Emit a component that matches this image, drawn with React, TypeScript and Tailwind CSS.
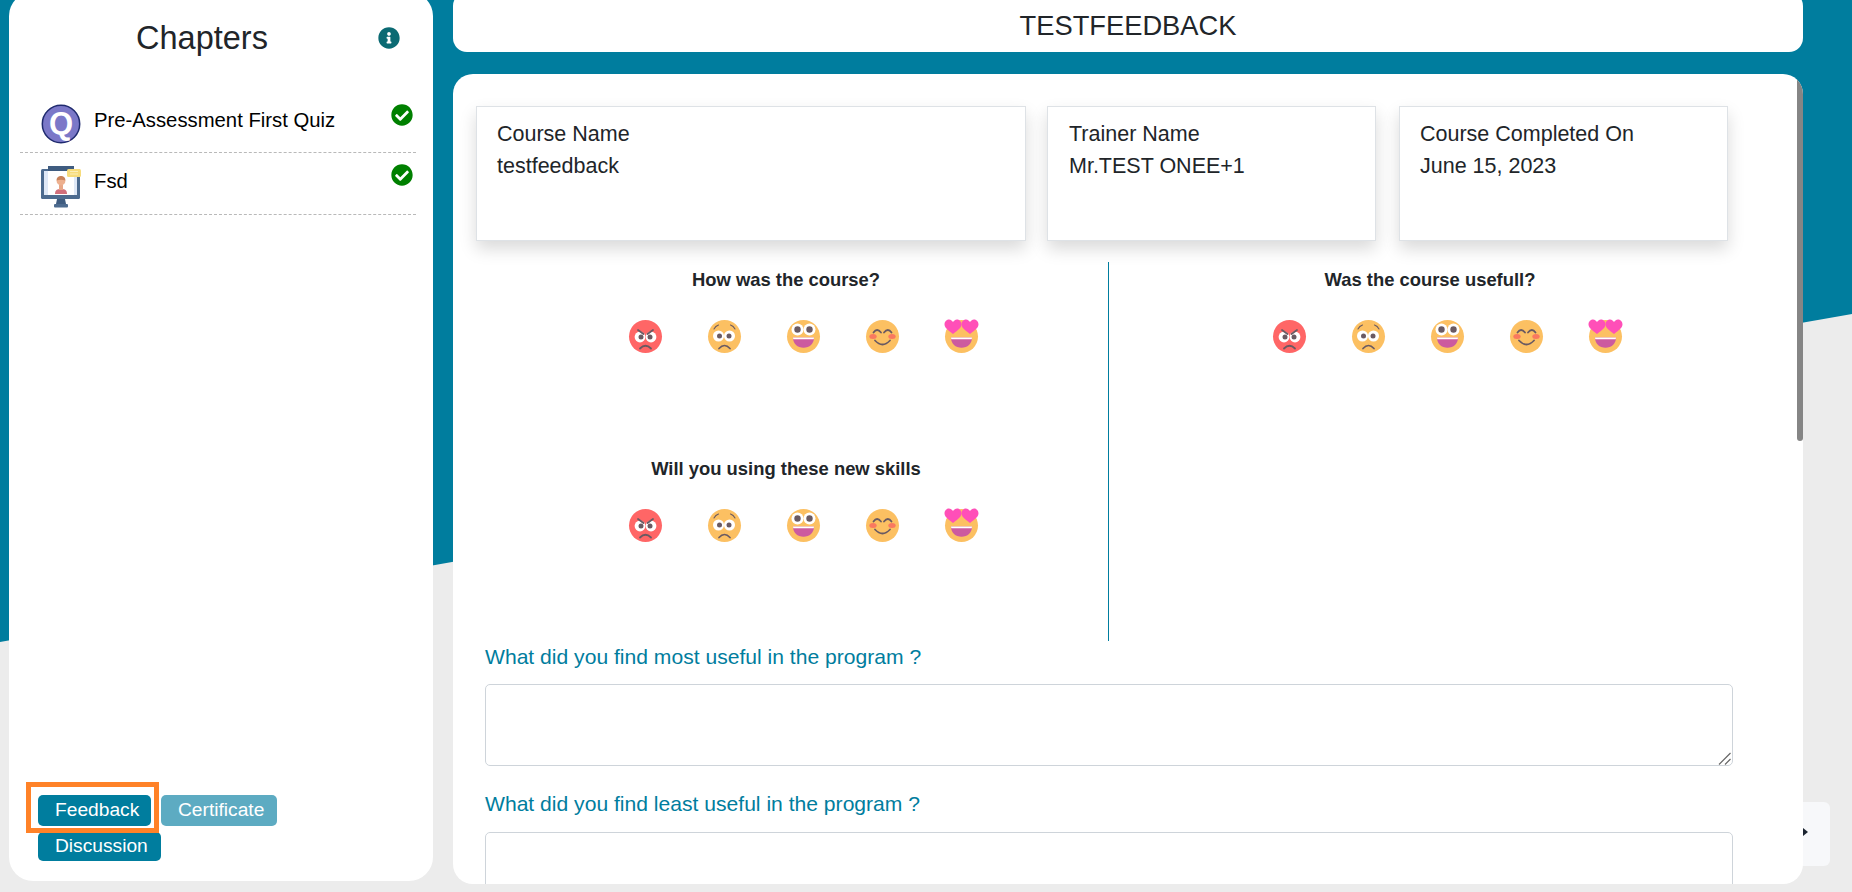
import React from 'react';
import { FaCheckCircle, FaInfoCircle } from 'react-icons/fa';

type Mood = 'angry' | 'worried' | 'grin' | 'smile' | 'love';

const MOODS: Mood[] = ['angry', 'worried', 'grin', 'smile', 'love'];
const INK = '#6a5a62';

const Heart = ({ x, y }: { x: number; y: number }) => (
  <path
    fill="#ff4fb8"
    d={`M${x} ${y + 7}C${x - 2} ${y + 5} ${x - 8.5} ${y + 1.5} ${x - 8.5} ${y - 2.5}C${x - 8.5} ${y - 6} ${x - 6} ${y - 7.5} ${x - 4} ${y - 7.5}C${x - 2} ${y - 7.5} ${x - 0.7} ${y - 6} ${x} ${y - 5}C${x + 0.7} ${y - 6} ${x + 2} ${y - 7.5} ${x + 4} ${y - 7.5}C${x + 6} ${y - 7.5} ${x + 8.5} ${y - 6} ${x + 8.5} ${y - 2.5}C${x + 8.5} ${y + 1.5} ${x + 2} ${y + 5} ${x} ${y + 7}Z`}
  />
);

const OpenMouth = () => (
  <>
    <path d="M6 17.5H27C27 24 22.5 27.8 16.5 27.8S6 24 6 17.5Z" fill="#cc5a9f" />
    <path d="M6 17.5H27L26.7 19.3H6.3Z" fill="#fff" />
  </>
);

const Emoji = ({ mood }: { mood: Mood }) => (
  <svg viewBox="0 0 33 33" className="w-[33px] h-[33px] shrink-0 overflow-visible">
    <circle cx="16.5" cy="16.5" r="16.5" fill={mood === 'angry' ? '#ff6666' : '#fcc062'} />
    {mood === 'angry' && (
      <>
        <circle cx="11" cy="17" r="5.4" fill="#fff" />
        <circle cx="22" cy="17" r="5.4" fill="#fff" />
        <circle cx="12" cy="17" r="2.5" fill={INK} />
        <circle cx="21" cy="17" r="2.5" fill={INK} />
        <path d="M9 10L14.5 14M24 10L18.5 14M11 28.5Q16.5 23 22 28.5" fill="none" stroke={INK} strokeWidth="1.8" strokeLinecap="round" />
      </>
    )}
    {mood === 'worried' && (
      <>
        <circle cx="10.5" cy="16" r="5.5" fill="#fff" />
        <circle cx="21.5" cy="16" r="5.5" fill="#fff" />
        <circle cx="11.5" cy="16" r="2.5" fill={INK} />
        <circle cx="21" cy="16" r="2.5" fill={INK} />
        <path d="M6 9Q7.5 6 10.5 5M27 9Q25.5 6 22.5 5" fill="none" stroke={INK} strokeWidth="1.1" strokeLinecap="round" />
        <path d="M11 28.5Q16.5 22.5 22 28.5" fill="none" stroke={INK} strokeWidth="1.7" strokeLinecap="round" />
      </>
    )}
    {mood === 'grin' && (
      <>
        <circle cx="10.5" cy="9.5" r="6" fill="#fff" />
        <circle cx="22.5" cy="9.5" r="6" fill="#fff" />
        <circle cx="10.5" cy="9.5" r="3.2" fill={INK} />
        <circle cx="22.5" cy="9.5" r="3.2" fill={INK} />
        <OpenMouth />
      </>
    )}
    {mood === 'smile' && (
      <>
        <ellipse cx="7" cy="16.5" rx="3.7" ry="2.5" fill="#f9795f" />
        <ellipse cx="26" cy="16.5" rx="3.7" ry="2.5" fill="#f9795f" />
        <path d="M7.5 12.5Q11 7.5 15 12.5M18 12.5Q22 7.5 25.5 12.5M9 20.5Q16.5 28.5 24 20.5" fill="none" stroke={INK} strokeWidth="1.8" strokeLinecap="round" />
      </>
    )}
    {mood === 'love' && (
      <>
        <OpenMouth />
        <Heart x={8} y={7} />
        <Heart x={25} y={7} />
      </>
    )}
  </svg>
);

const Rating = ({ title, width }: { title: string; width: string }) => (
  <div className={`h-[189px] flex flex-col items-center ${width}`}>
    <h6 className="h-[36px] leading-[36px] text-[18.4px] font-bold text-[#212529]">{title}</h6>
    <div className="ml-[34px] mt-[22px] flex gap-[46px]">
      {MOODS.map(mood => (
        <Emoji key={mood} mood={mood} />
      ))}
    </div>
  </div>
);

const InfoCard = ({ label, value, className }: { label: string; value: string; className: string }) => (
  <div className={`h-[135px] bg-white border border-[#dee2e6] shadow-[0_8px_16px_rgba(0,0,0,0.15)] pl-[20px] pt-[11px] text-[21.5px] leading-[32px] text-[#212529] ${className}`}>
    <p>{label}</p>
    <p>{value}</p>
  </div>
);

const QuizIcon = () => (
  <svg viewBox="0 0 40 40" className="w-[40px] h-[40px] shrink-0 mt-[6px]">
    <circle cx="20" cy="20" r="18.7" fill="#7b78c8" stroke="#1f2a6e" strokeWidth="1.5" />
    <text x="20" y="30" textAnchor="middle" fontSize="31" fontWeight="700" fontFamily="'Liberation Sans', Arial, sans-serif" fill="#fff">Q</text>
  </svg>
);

const LessonIcon = () => (
  <svg viewBox="0 0 40 42" className="w-[40px] h-[42px] shrink-0 mt-[2px]">
    <rect x="0" y="3" width="39" height="30" rx="1.5" fill="#4d6b8f" />
    <rect x="7" y="0" width="26" height="5" fill="#3f5c80" />
    <rect x="3" y="5" width="33" height="24" fill="#dfe8f6" />
    <rect x="7" y="5" width="26" height="24" fill="#fff" />
    <path d="M14 28C14 24 16 23 20 23S26 24 26 28Z" fill="#d2707c" />
    <rect x="18" y="19" width="4" height="5" fill="#e8a787" />
    <circle cx="20" cy="15" r="4.4" fill="#edb08f" />
    <path d="M15.6 14.5C15.6 11 18 10 20 10S24.4 11 24.4 14.5C22 13.5 18 13.5 15.6 14.5Z" fill="#c9825a" />
    <rect x="26" y="3" width="14" height="8" rx="1.5" fill="#f7dc7c" />
    <path d="M29 5.5H37M29 8H37" stroke="#fbeebb" strokeWidth="1" />
    <path d="M16 33H24L25 38H15Z" fill="#3f5c80" />
    <rect x="13" y="38" width="14" height="3.5" rx="1" fill="#4d6b8f" />
  </svg>
);

const ChapterRow = ({ title, icon, height, textTop, checkTop }: { title: string; icon: React.ReactNode; height: string; textTop: string; checkTop: string }) => (
  <div className={`relative flex items-start border-b border-dashed border-[#b9b9b9] pl-[21px] ${height}`}>
    {icon}
    <span className={`ml-[13px] text-[20.3px] leading-[28px] text-black ${textTop}`}>{title}</span>
    <FaCheckCircle className={`absolute right-[3px] text-[22px] text-[#008000] ${checkTop}`} />
  </div>
);

export default function App() {
  return (
    <div className="relative w-[1852px] h-[892px] overflow-hidden bg-[#ececec] [font-family:'Liberation_Sans',Arial,sans-serif]">
      {/* Teal slanted backdrop */}
      <div className="absolute inset-0 bg-[#007d9e] [clip-path:polygon(0_0,100%_0,100%_314px,0_642px)]" />

      {/* Scroll-to-top button peeking from behind the card */}
      <div className="absolute left-[1790px] top-[802px] w-[40px] h-[64px] rounded-r-[6px] bg-[#f7f8fa]">
        <div className="absolute left-[13px] top-[26px] w-0 h-0 border-y-[4px] border-y-transparent border-l-[5px] border-l-[#1b2430]" />
      </div>

      <div className="relative flex items-start gap-[20px] pl-[9px] mt-[-8px]">
        {/* Sidebar */}
        <aside className="relative flex flex-col w-[424px] h-[889px] bg-white rounded-[24px] pl-[11px] pr-[17px]">
          <div className="relative h-[106px] pt-[24px]">
            <h4 className="text-center text-[32.5px] leading-[44px] text-[#212529] pr-[32px]">Chapters</h4>
            <FaInfoCircle className="absolute right-[16px] top-[35px] text-[22px] text-[#0b6a73]" />
          </div>
          <ChapterRow title="Pre-Assessment First Quiz" icon={<QuizIcon />} height="h-[55px]" textTop="mt-[8px]" checkTop="top-[6px]" />
          <div className="h-[11px]" />
          <ChapterRow title="Fsd" icon={<LessonIcon />} height="h-[51px]" textTop="mt-[3px]" checkTop="top-0" />

          <div className="mt-auto mb-[20px] ml-[18px] flex flex-wrap gap-x-[10px] gap-y-[6px] w-[260px]">
            <button className="w-[113px] h-[31px] pl-[17px] text-left rounded-[5px] bg-[#007d9e] text-white text-[19.2px]">Feedback</button>
            <button className="w-[116px] h-[31px] pl-[17px] text-left rounded-[5px] bg-[#5dabc2] text-white text-[19.2px]">Certificate</button>
            <button className="w-[123px] h-[29px] pl-[17px] text-left rounded-[5px] bg-[#007d9e] text-white text-[19.2px]">Discussion</button>
          </div>

          {/* Highlight box around Feedback */}
          <div className="absolute left-[17px] top-[790px] w-[133px] h-[51px] border-[5px] border-[#ff8228]" />
        </aside>

        {/* Main column */}
        <main className="flex flex-col gap-[22px] w-[1350px]">
          <div className="h-[60px] pt-[8px] rounded-[14px] bg-white flex items-center justify-center text-[27.3px] text-[#212529]">
            TESTFEEDBACK
          </div>

          <div className="relative h-[810px] overflow-hidden rounded-[20px] bg-white pt-[32px] pl-[23px]">
            <div className="flex">
              <InfoCard label="Course Name" value="testfeedback" className="w-[550px]" />
              <InfoCard label="Trainer Name" value="Mr.TEST ONEE+1" className="w-[329px] ml-[21px] pl-[21px]" />
              <InfoCard label="Course Completed On" value="June 15, 2023" className="w-[329px] ml-[23px]" />
            </div>

            <div className="flex h-[379px] mt-[21px]">
              <div className="w-[633px] border-r border-[#007d9e]">
                <Rating title="How was the course?" width="w-[620px]" />
                <Rating title="Will you using these new skills" width="w-[620px]" />
              </div>
              <div className="w-[642px]">
                <Rating title="Was the course usefull?" width="w-full" />
              </div>
            </div>

            <div className="ml-[9px] w-[1248px] flex flex-col text-[21.1px] leading-[24px] text-[#007d9e]">
              <label className="mt-[4px] mb-[15px]">What did you find most useful in the program ?</label>
              <div className="relative shrink-0">
                <textarea className="block h-[82px] w-full resize-none rounded-[5px] border border-[#ced4da] bg-white" />
                {/* Resize grip */}
                <svg viewBox="0 0 13 13" className="absolute right-[2px] bottom-[1px] w-[13px] h-[13px]">
                  <path d="M1 12.5L12.5 1M7 12.5L12.5 7" stroke="#666" strokeWidth="1.2" fill="none" />
                </svg>
              </div>
              <label className="mt-[26px] mb-[16px]">What did you find least useful in the program ?</label>
              <textarea className="block h-[82px] w-full resize-none rounded-[5px] border border-[#ced4da] bg-white shrink-0" />
            </div>

            {/* Scrollbar thumb */}
            <div className="absolute right-0 top-0 w-[6px] h-[367px] rounded-[3px] bg-[#858585]" />
          </div>
        </main>
      </div>
    </div>
  );
}
